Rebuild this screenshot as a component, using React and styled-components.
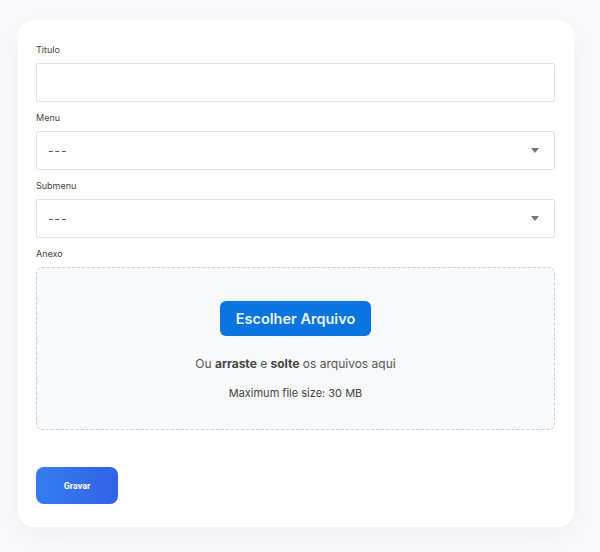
import React from "react";
import styled, { createGlobalStyle } from "styled-components";

const GlobalStyle = createGlobalStyle`
  html, body {
    margin: 0;
    padding: 0;
    background: #fafafc;
    font-family: Inter, "Noto Sans", sans-serif;
  }
`;

function Select() {
  return (
    <SelectBox>
      <Dashes>---</Dashes>
      <svg width="8" height="5" viewBox="0 0 8 5">
        <path d="M0 0 L8 0 L4 5 Z" fill="#777" />
      </svg>
    </SelectBox>
  );
}

export default function App() {
  return (
    <>
      <GlobalStyle />
      <Page>
        <Card>
          <Field>
            <Label>Titulo</Label>
            <Input type="text" />
          </Field>
          <Field>
            <Label>Menu</Label>
            <Select />
          </Field>
          <Field>
            <Label>Submenu</Label>
            <Select />
          </Field>
          <Field>
            <Label>Anexo</Label>
            <DropZone>
              <ChooseButton>Escolher Arquivo</ChooseButton>
              <DropText>
                Ou <b>arraste</b> e <b>solte</b> os arquivos aqui
              </DropText>
              <SizeText>Maximum file size: 30 MB</SizeText>
            </DropZone>
          </Field>
          <SaveButton>Gravar</SaveButton>
        </Card>
      </Page>
    </>
  );
}

const Page = styled.div`
  width: 600px;
  height: 552px;
  padding: 20px 0 0 18px;
  box-sizing: border-box;
  overflow: hidden;
`;

const Card = styled.div`
  width: 556px;
  height: 507px;
  box-sizing: border-box;
  padding: 24px 19px 0 18px;
  background: #fff;
  border-radius: 16px;
  box-shadow: 0 8px 30px rgba(60, 70, 140, 0.06);
  display: flex;
  flex-direction: column;
`;

const Field = styled.div`
  display: flex;
  flex-direction: column;
  margin-bottom: 10px;
`;

const Label = styled.label`
  font-size: 9px;
  line-height: 12px;
  color: #444;
  margin-bottom: 7px;
`;

const Input = styled.input`
  height: 39px;
  box-sizing: border-box;
  border: 1px solid #e3e3e6;
  border-radius: 2px;
  outline: none;
  background: #fff;
`;

const SelectBox = styled.div`
  height: 39px;
  box-sizing: border-box;
  border: 1px solid #e3e3e6;
  border-radius: 2px;
  display: flex;
  align-items: center;
  justify-content: space-between;
  padding: 0 15px 0 11px;
`;

const Dashes = styled.span`
  font-size: 12px;
  color: #555;
  letter-spacing: 1px;
`;

const DropZone = styled.div`
  height: 163px;
  box-sizing: border-box;
  border: 1.5px dashed #cfd0d6;
  border-radius: 6px;
  background: #f8f9fb;
  display: flex;
  flex-direction: column;
  align-items: center;
  padding-top: 33px;
`;

const ChooseButton = styled.button`
  width: 151px;
  height: 35px;
  border: none;
  border-radius: 6px;
  background: #0b74e0;
  color: #e8f4ff;
  font-family: Inter, sans-serif;
  font-size: 14.5px;
  font-weight: 600;
`;

const DropText = styled.div`
  margin-top: 20px;
  font-size: 12px;
  line-height: 16px;
  color: #555;
  b {
    font-weight: 700;
    color: #444;
  }
`;

const SizeText = styled.div`
  margin-top: 14px;
  font-size: 11px;
  line-height: 14px;
  color: #444;
`;

const SaveButton = styled.button`
  margin-top: 27px;
  width: 82px;
  height: 37px;
  border: none;
  border-radius: 8px;
  background: linear-gradient(90deg, #357cf0, #3262e6);
  color: #fff;
  font-family: Roboto, sans-serif;
  font-size: 9px;
  font-weight: 700;
  align-self: flex-start;
`;
